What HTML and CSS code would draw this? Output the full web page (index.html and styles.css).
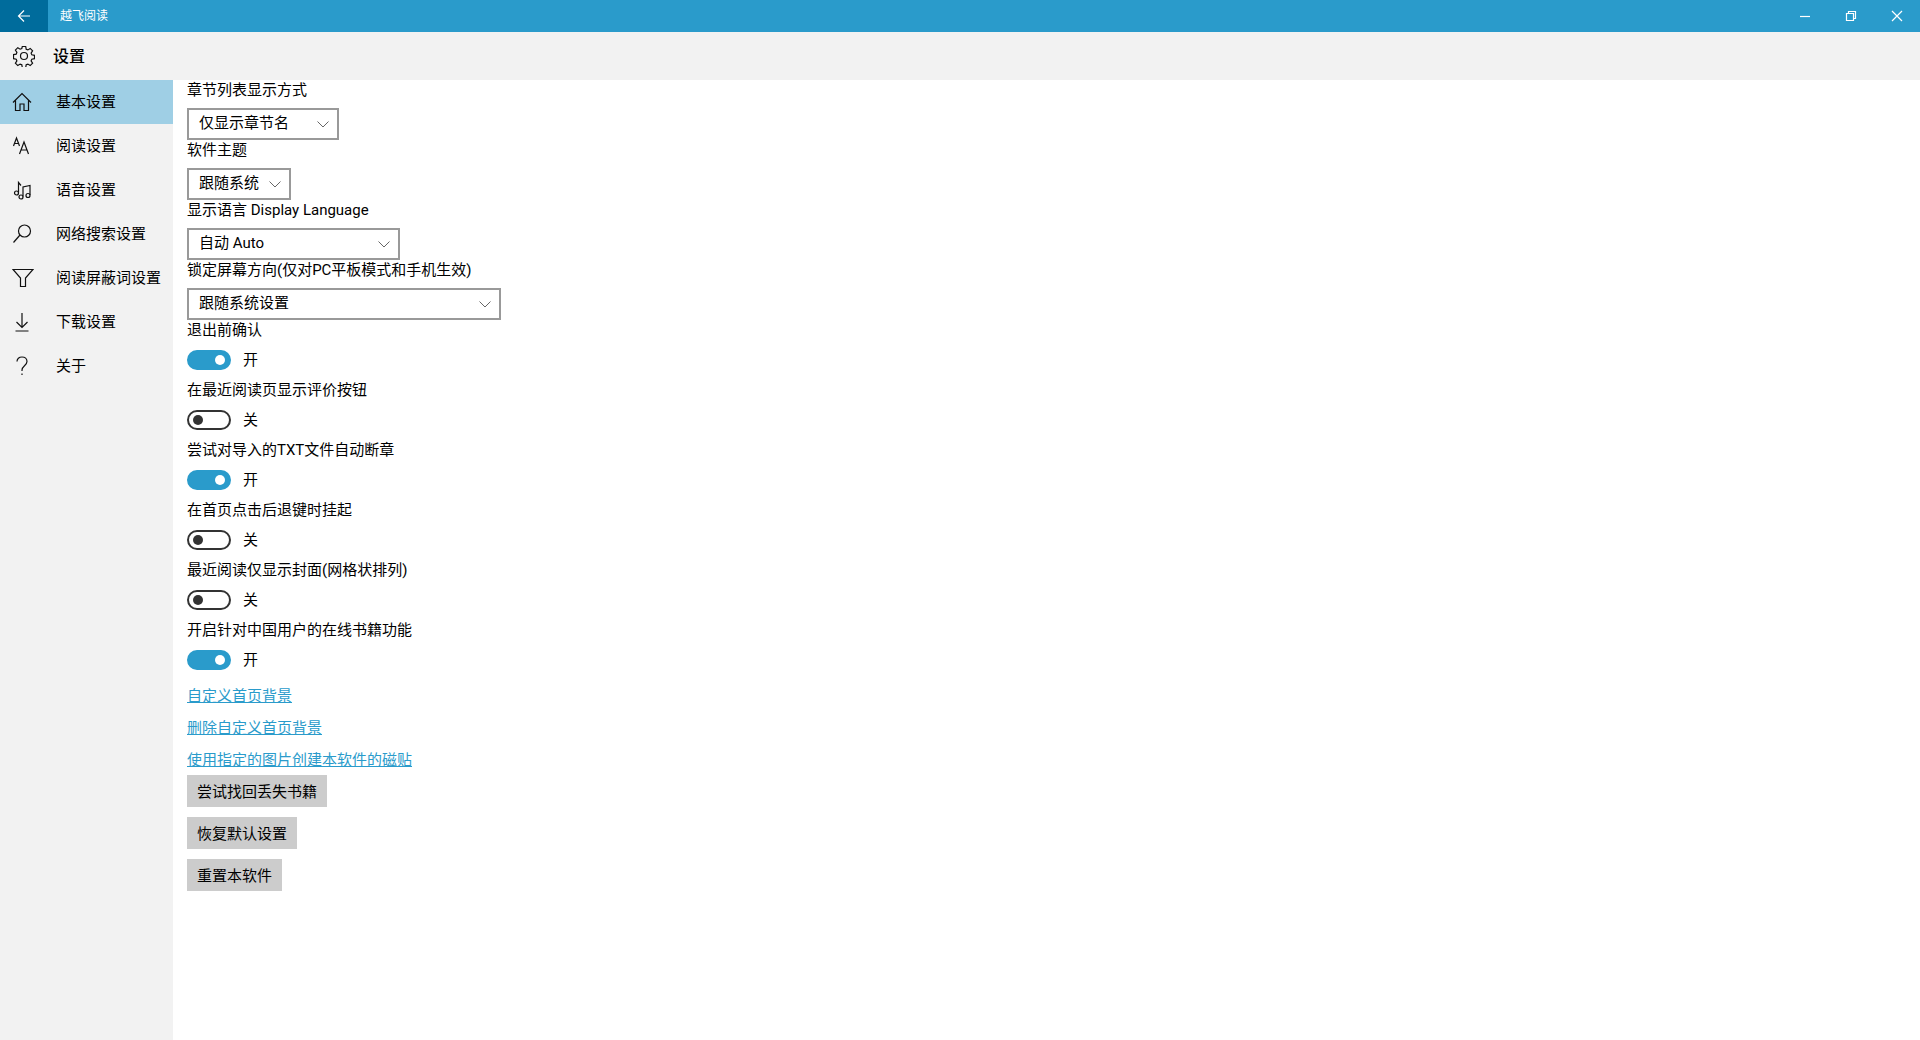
FILE: index.html
```html
<!DOCTYPE html>
<html lang="zh-CN">
<head>
<meta charset="utf-8">
<title>越飞阅读</title>
<link rel="stylesheet" href="styles.css">
</head>
<body>
<header class="titlebar">
  <div class="back"><svg width="16" height="16" viewBox="0 0 16 16" class="line white"><path d="M14 8H2.500M8 2.500 2.500 8 8 13.500"/></svg></div>
  <div class="apptitle">越飞阅读</div>
  <div class="winctl">
    <div class="winbtn"><svg width="12" height="12" viewBox="0 0 12 12" class="line white"><path d="M1 6.500H11"/></svg></div>
    <div class="winbtn"><svg width="12" height="12" viewBox="0 0 12 12" class="line white"><path d="M1.500 3.500H8.500V10.500H1.500ZM3.500 3.500V1.500H10.500V8.500H8.500"/></svg></div>
    <div class="winbtn"><svg width="12" height="12" viewBox="0 0 12 12" class="line white"><path d="M1 1 11 11M11 1 1 11"/></svg></div>
  </div>
</header>
<div class="pagehead">
  <svg class="gear line dark" width="22" height="22" viewBox="0 0 22 22"><path d="M9.300 1.500h3.400l.5 2.700 1.700.7 2.300-1.500 2.400 2.400-1.500 2.300.7 1.700 2.700.5v3.400l-2.700.5-.7 1.700 1.500 2.300-2.400 2.400-2.300-1.500-1.700.7-.5 2.700H9.300l-.5-2.700-1.700-.7-2.300 1.500-2.400-2.400 1.500-2.300-.7-1.700-2.700-.5V9.600l2.700-.5.7-1.700-1.500-2.300L4.800 2.700l2.300 1.500 1.700-.7z"/><circle cx="11" cy="11" r="3.500"/></svg>
  <h1 class="pagetitle">设置</h1>
</div>
<div class="main">
  <nav class="sidebar">
    <a class="navitem active"><span class="navicon"><svg width="20" height="20" viewBox="0 0 20 20" class="line dark"><path d="M1 10.500 10 1.500l9 9M3.500 8.500V18.500H8V12h4v6.500h4.500V8.500"/></svg></span>基本设置</a>
    <a class="navitem"><span class="navicon"><svg width="20" height="20" viewBox="0 0 20 20" class="line dark"><path d="M1.500 10 4.500 2 7.500 10M2.500 7.500H6.500M7.500 18 12 6 16.500 18M9 14H15"/></svg></span>阅读设置</a>
    <a class="navitem"><span class="navicon"><svg width="20" height="20" viewBox="0 0 20 20" class="line dark"><path d="M6.500 12.500V2.500L9 5.500M11 16.500V7L18 5.500V15"/><circle cx="4.500" cy="13" r="2"/><circle cx="9" cy="17" r="2"/><circle cx="16" cy="15.500" r="2"/></svg></span>语音设置</a>
    <a class="navitem"><span class="navicon"><svg width="20" height="20" viewBox="0 0 20 20" class="line dark"><circle cx="12.500" cy="7" r="6"/><path d="M8 11 1.500 18.500"/></svg></span>网络搜索设置</a>
    <a class="navitem"><span class="navicon"><svg width="22" height="20" viewBox="0 0 22 20" class="line dark"><path d="M1 1.500H21L13.500 10V18.500H8.500V10Z"/></svg></span>阅读屏蔽词设置</a>
    <a class="navitem"><span class="navicon"><svg width="20" height="20" viewBox="0 0 20 20" class="line dark"><path d="M10 1V15.500M4.500 10 10 15.500 15.500 10M3.500 19H16.500"/></svg></span>下载设置</a>
    <a class="navitem"><span class="navicon"><svg width="20" height="20" viewBox="0 0 20 20" class="line dark"><path d="M5 5.500C5 3 7 1 10 1s5 2 5 4.500c0 4-5 4.500-5 8.500v1M10 17.500v1.500"/></svg></span>关于</a>
  </nav>
  <main class="content">
    <div class="setting"><div class="label">章节列表显示方式</div><div class="select w152"><span class="value">仅显示章节名</span><svg class="chev" width="12" height="7" viewBox="0 0 12 7"><path d="M.5.5 6 6 11.500.5"/></svg></div></div>
    <div class="setting"><div class="label">软件主题</div><div class="select w104"><span class="value">跟随系统</span><svg class="chev" width="12" height="7" viewBox="0 0 12 7"><path d="M.5.5 6 6 11.500.5"/></svg></div></div>
    <div class="setting"><div class="label">显示语言 Display Language</div><div class="select w213"><span class="value">自动 Auto</span><svg class="chev" width="12" height="7" viewBox="0 0 12 7"><path d="M.5.5 6 6 11.500.5"/></svg></div></div>
    <div class="setting"><div class="label">锁定屏幕方向(仅对PC平板模式和手机生效)</div><div class="select w314"><span class="value">跟随系统设置</span><svg class="chev" width="12" height="7" viewBox="0 0 12 7"><path d="M.5.5 6 6 11.500.5"/></svg></div></div>
    <div class="setting"><div class="label">退出前确认</div><div class="toggle on"><span class="track"><span class="knob"></span></span><span class="state">开</span></div></div>
    <div class="setting"><div class="label">在最近阅读页显示评价按钮</div><div class="toggle"><span class="track"><span class="knob"></span></span><span class="state">关</span></div></div>
    <div class="setting"><div class="label">尝试对导入的TXT文件自动断章</div><div class="toggle on"><span class="track"><span class="knob"></span></span><span class="state">开</span></div></div>
    <div class="setting"><div class="label">在首页点击后退键时挂起</div><div class="toggle"><span class="track"><span class="knob"></span></span><span class="state">关</span></div></div>
    <div class="setting"><div class="label">最近阅读仅显示封面(网格状排列)</div><div class="toggle"><span class="track"><span class="knob"></span></span><span class="state">关</span></div></div>
    <div class="setting"><div class="label">开启针对中国用户的在线书籍功能</div><div class="toggle on"><span class="track"><span class="knob"></span></span><span class="state">开</span></div></div>
    <div class="links">
      <a class="link">自定义首页背景</a>
      <a class="link">删除自定义首页背景</a>
      <a class="link">使用指定的图片创建本软件的磁贴</a>
    </div>
    <div class="buttons">
      <div class="btn">尝试找回丢失书籍</div>
      <div class="btn">恢复默认设置</div>
      <div class="btn">重置本软件</div>
    </div>
  </main>
</div>
</body>
</html>
```
FILE: styles.css
```css
* { box-sizing: border-box; }
html, body { margin: 0; height: 100%; overflow: hidden; }
body {
  display: flex;
  flex-direction: column;
  height: 1040px;
  background: #fff;
  color: #000;
  font-family: Roboto, "Noto Sans CJK SC", sans-serif;
  font-size: 15px;
}
.line { fill: none; stroke-width: 1.200; }
.white { stroke: #fff; }
.dark { stroke: #111; }
.titlebar { display: flex; align-items: center; height: 32px; background: #2a9bcb; color: #fff; flex: none; }
.back { display: flex; align-items: center; justify-content: center; width: 48px; height: 32px; background: #006c9c; }
.apptitle { margin-left: 12px; font-size: 12px; line-height: 32px; }
.winctl { display: flex; margin-left: auto; }
.winbtn { display: flex; align-items: center; justify-content: center; width: 46px; height: 32px; }
.pagehead { display: flex; align-items: center; height: 48px; background: #f2f2f2; flex: none; }
.gear { margin-left: 13px; }
.pagetitle { margin: 2px 0 0 18px; font-size: 16px; font-weight: 500; line-height: 46px; }
.main { display: flex; flex: 1; min-height: 0; }
.sidebar { width: 173px; background: #f2f2f2; flex: none; }
.navitem { display: flex; align-items: center; height: 44px; padding-left: 12px; line-height: 44px; color: #000; }
.navitem.active { background: #9fcfe5; }
.navicon { display: flex; align-items: center; width: 44px; }
.content { flex: 1; padding-left: 14px; }
.setting { height: 60px; }
.label { height: 20px; line-height: 21px; white-space: nowrap; }
.select { display: flex; align-items: center; justify-content: space-between; height: 32px; margin-top: 8px; padding: 0 8px 0 10px; border: 2px solid #999; }
.value { line-height: 24px; margin-top: -2px; }
.w152 { width: 152px; }
.w104 { width: 104px; }
.w213 { width: 213px; }
.w314 { width: 314px; }
.chev { fill: none; stroke: #666; stroke-width: 1; }
.toggle { display: flex; align-items: center; gap: 12px; height: 32px; margin-top: 8px; padding-bottom: 8px; }
.state { line-height: 22px; margin-top: -1px; }
.track { display: flex; align-items: center; width: 44px; height: 20px; padding: 0 3px; border: 2px solid #333; border-radius: 10px; }
.knob { width: 10px; height: 10px; border-radius: 50%; background: #333; margin-left: 1px; }
.toggle.on .track { justify-content: flex-end; background: #2a9bcb; border-color: #2a9bcb; }
.toggle.on .knob { background: #fff; margin: 0 1px 0 0; }
.links { display: flex; flex-direction: column; align-items: flex-start; }
.link { height: 32px; line-height: 32px; color: #2a9bcb; text-decoration: underline; }
.buttons { display: flex; flex-direction: column; align-items: flex-start; gap: 10px; margin-top: -1px; }
.btn { height: 32px; padding: 0 10px; line-height: 34px; background: #ccc; }
```
